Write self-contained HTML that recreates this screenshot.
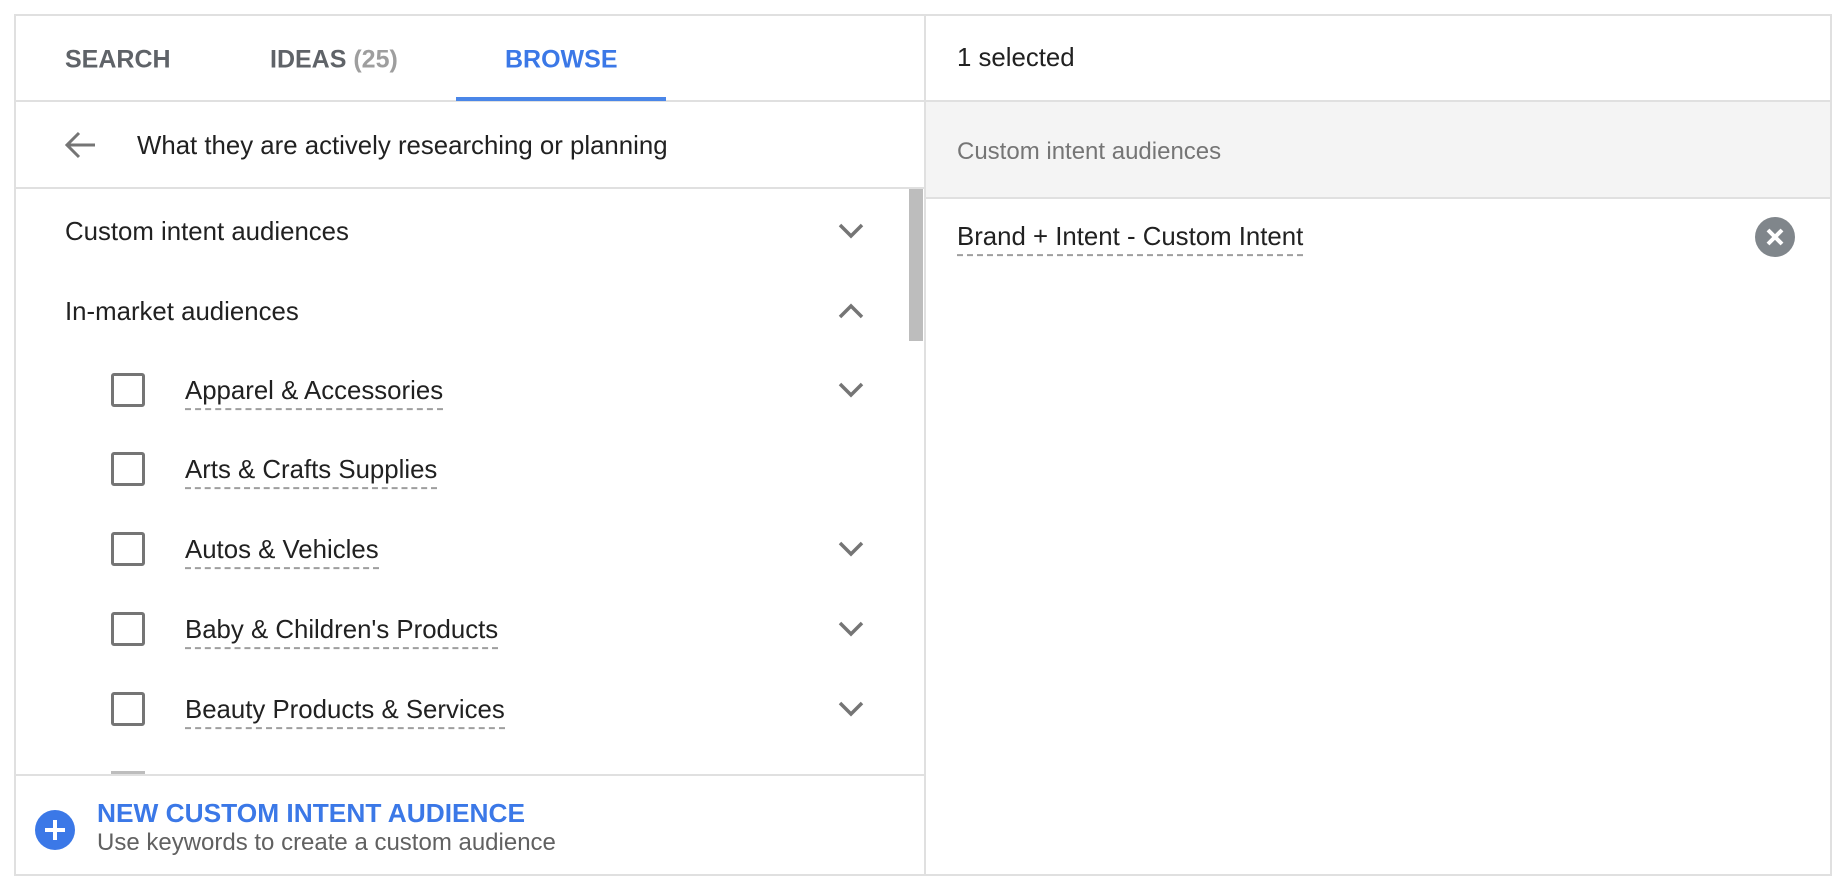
<!DOCTYPE html>
<html><head><meta charset="utf-8"><style>
*{box-sizing:border-box;margin:0;padding:0}
body{width:1846px;height:894px;background:#fff;font-family:"Liberation Sans",Arial,sans-serif;color:#212121;position:relative;overflow:hidden}
.abs{position:absolute}
.box{left:14px;top:14px;width:1818px;height:862px;border:2px solid #e0e0e0}
.t{position:absolute;white-space:nowrap;line-height:1;transform:translateY(calc(-50% + 2px))}
.tab{font-size:25px;font-weight:bold;color:#5f6368;top:58px}
.dl{border-bottom:2px dashed #9e9e9e;padding-bottom:3px}
.cb{position:absolute;left:111px;width:34px;height:34px;border:3px solid #757575;border-radius:3px}
.ch{position:absolute;left:838px}
.b{font-size:25.8px}
</style></head><body>
<div class="abs box"></div>
<div class="abs" style="left:924px;top:14px;width:2px;height:862px;background:#e0e0e0"></div>
<div class="abs" style="left:14px;top:100px;width:1818px;height:2px;background:#e0e0e0"></div>
<div class="abs" style="left:456px;top:97px;width:210px;height:4px;background:#4a86e8"></div>
<div class="t tab" style="left:65px">SEARCH</div>
<div class="t tab" style="left:270px">IDEAS <span style="color:#9e9e9e">(25)</span></div>
<div class="t tab" style="left:505px;color:#3b78e7">BROWSE</div>
<svg class="abs" style="left:63px;top:130px" width="34" height="30" viewBox="0 0 34 30"><path d="M32 15H4M16 3L4 15l12 12" fill="none" stroke="#757575" stroke-width="3"/></svg>
<div class="t b" style="left:137px;top:145px">What they are actively researching or planning</div>
<div class="abs" style="left:14px;top:187px;width:911px;height:2px;background:#e0e0e0"></div>
<div class="abs" style="left:909px;top:189px;width:14px;height:152px;background:#bdbdbd"></div>
<div class="t b" style="left:65px;top:231px">Custom intent audiences</div>
<div class="t b" style="left:65px;top:311px">In-market audiences</div>
<svg class="ch" style="top:222px" width="26" height="18" viewBox="0 0 26 18"><path d="M2 3l11 11L24 3" fill="none" stroke="#757575" stroke-width="3.5"/></svg>
<svg class="ch" style="top:302px" width="26" height="18" viewBox="0 0 26 18"><path d="M2 15L13 4l11 11" fill="none" stroke="#757575" stroke-width="3.5"/></svg>

<div class="cb" style="top:373px"></div><div class="t b" style="left:185px;top:390px"><span class="dl">Apparel &amp; Accessories</span></div>
<svg class="ch" style="top:381px" width="26" height="18" viewBox="0 0 26 18"><path d="M2 3l11 11L24 3" fill="none" stroke="#757575" stroke-width="3.5"/></svg>
<div class="cb" style="top:452px"></div><div class="t b" style="left:185px;top:469px"><span class="dl">Arts &amp; Crafts Supplies</span></div>
<div class="cb" style="top:532px"></div><div class="t b" style="left:185px;top:549px"><span class="dl">Autos &amp; Vehicles</span></div>
<svg class="ch" style="top:540px" width="26" height="18" viewBox="0 0 26 18"><path d="M2 3l11 11L24 3" fill="none" stroke="#757575" stroke-width="3.5"/></svg>
<div class="cb" style="top:612px"></div><div class="t b" style="left:185px;top:629px"><span class="dl">Baby &amp; Children's Products</span></div>
<svg class="ch" style="top:620px" width="26" height="18" viewBox="0 0 26 18"><path d="M2 3l11 11L24 3" fill="none" stroke="#757575" stroke-width="3.5"/></svg>
<div class="cb" style="top:692px"></div><div class="t b" style="left:185px;top:709px"><span class="dl">Beauty Products &amp; Services</span></div>
<svg class="ch" style="top:700px" width="26" height="18" viewBox="0 0 26 18"><path d="M2 3l11 11L24 3" fill="none" stroke="#757575" stroke-width="3.5"/></svg>
<div class="abs" style="left:111px;top:771px;width:34px;height:4px;background:#bdbdbd"></div>
<div class="abs" style="left:16px;top:774px;width:908px;height:2px;background:#e0e0e0"></div>
<svg class="abs" style="left:35px;top:810px" width="40" height="40" viewBox="0 0 40 40"><circle cx="20" cy="20" r="20" fill="#3b78e7"/><path d="M20 10v20M10 20h20" stroke="#fff" stroke-width="4"/></svg>
<div class="t" style="left:97px;top:811px;font-size:26.3px;color:#3b78e7;font-weight:bold">NEW CUSTOM INTENT AUDIENCE</div>
<div class="t" style="left:97px;top:841px;font-size:24px;color:#616161">Use keywords to create a custom audience</div>

<div class="t b" style="left:957px;top:57px">1 selected</div>
<div class="abs" style="left:926px;top:102px;width:904px;height:97px;background:#f4f4f4;border-bottom:2px solid #e0e0e0"></div>
<div class="abs" style="left:1830px;top:14px;width:2px;height:862px;background:#e0e0e0"></div>
<div class="t" style="left:957px;top:150px;font-size:24px;color:#757575">Custom intent audiences</div>
<div class="t b" style="left:957px;top:236px"><span class="dl">Brand + Intent - Custom Intent</span></div>
<svg class="abs" style="left:1755px;top:217px" width="40" height="40" viewBox="0 0 40 40"><circle cx="20" cy="20" r="20" fill="#80868b"/><path d="M13 13l14 14M27 13L13 27" stroke="#fff" stroke-width="4"/></svg>
</body></html>
